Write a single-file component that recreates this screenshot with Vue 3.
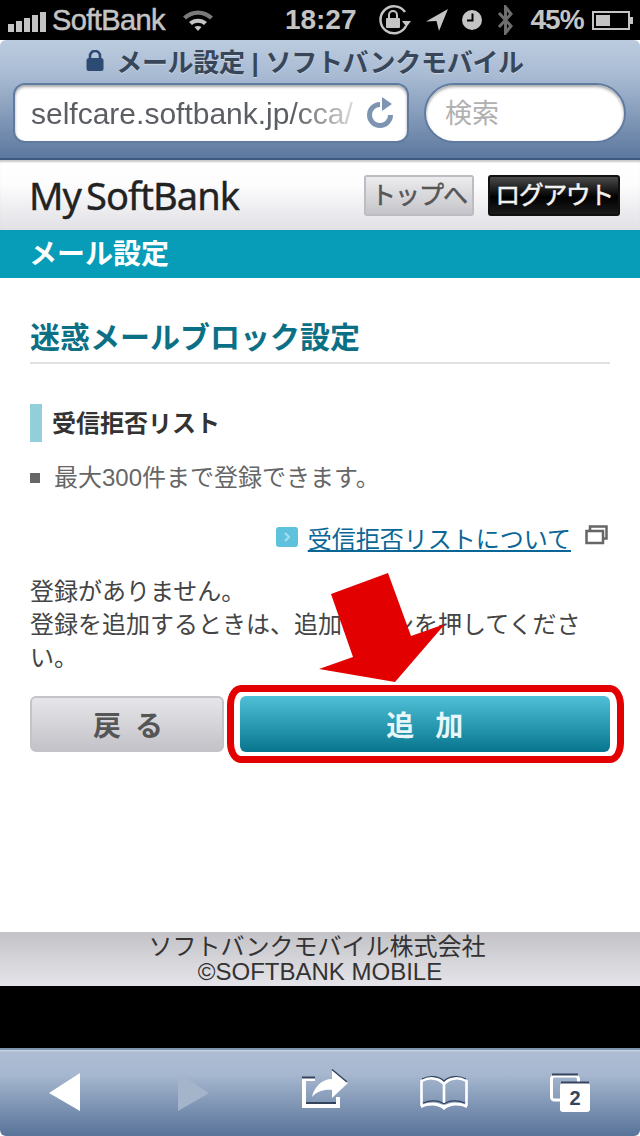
<template>
  <div class="phone">
    <!-- status bar -->
    <div class="status">
      <div class="signal">
        <i v-for="h in signalBars" :key="h" :style="{ height: h + 'px' }"></i>
      </div>
      <span class="carrier">SoftBank</span>
      <svg class="wifi" width="32" height="24" viewBox="0 0 32 24">
        <path d="M1 8.500C9.500 0.500 22.500 0.500 31 8.500L28 11.500C21 5 11 5 4 11.500Z" fill="#7a7a7a" />
        <path d="M7 14C12 9.500 20 9.500 25 14L22 17C18.500 14 13.500 14 10 17Z" fill="#c4c4c4" />
        <path d="M12.500 19C14.500 17.500 17.500 17.500 19.500 19L16 23Z" fill="#c4c4c4" />
      </svg>
      <span class="time">18:27</span>
      <svg class="rotlock" width="35" height="30" viewBox="0 0 35 30">
        <path d="M29 21A13.500 13.500 0 1 1 28 7" fill="none" stroke="#c4c4c4" stroke-width="2.500" />
        <path d="M25 16H34L29.500 22Z" fill="#c4c4c4" />
        <rect x="9" y="13" width="14" height="10" rx="1" fill="#c4c4c4" />
        <path d="M12 13V10A4 4 0 0 1 20 10V13" fill="none" stroke="#c4c4c4" stroke-width="2" />
      </svg>
      <svg class="locate" width="22" height="22" viewBox="0 0 22 22">
        <path d="M22 0L0 12.500L10.500 12L13 22Z" fill="#c4c4c4" />
      </svg>
      <svg class="clock" width="20" height="20" viewBox="0 0 20 20">
        <circle cx="10" cy="10" r="10" fill="#c4c4c4" />
        <path d="M10.500 3.500V10.500H5" fill="none" stroke="#000" stroke-width="2" />
      </svg>
      <svg class="bt" width="17" height="30" viewBox="0 0 17 30">
        <path d="M2 8L14 21L8.500 28V2L14 9L2 22" fill="none" stroke="#6e6e6e" stroke-width="3" />
      </svg>
      <span class="percent">45%</span>
      <div class="battery"><b></b></div>
    </div>

    <!-- safari address area -->
    <div class="browser-top">
      <div class="page-title">
        <svg width="18" height="21" viewBox="0 0 18 21">
          <path d="M4 9V6A5 5 0 0 1 14 6V9" fill="none" stroke="#2d4a73" stroke-width="2.600" />
          <rect x="0.500" y="8" width="17" height="13" rx="2.500" fill="#2d4a73" />
        </svg>
        <span>メール設定 | ソフトバンクモバイル</span>
      </div>
      <div class="fields">
        <div class="url">
          <span class="url-text">selfcare.softbank.jp/cca/</span>
          <svg width="28" height="32" viewBox="0 0 28 32">
            <path d="M23.500 18A10.500 10.500 0 1 1 13 7.500" fill="none" stroke="#7e95b2" stroke-width="5" />
            <path d="M15 0L25 7L15 14Z" fill="#7e95b2" />
          </svg>
        </div>
        <div class="search">検索</div>
      </div>
    </div>

    <!-- site header -->
    <header class="site-head">
      <span class="logo">My SoftBank</span>
      <div class="head-btns">
        <a class="btn-top">トップへ</a>
        <a class="btn-logout">ログアウト</a>
      </div>
    </header>
    <div class="band">メール設定</div>

    <main class="content">
      <h1>迷惑メールブロック設定</h1>
      <h2>受信拒否リスト</h2>
      <p class="note">最大300件まで登録できます。</p>
      <div class="link-row">
        <span class="chev">
          <svg width="8" height="12" viewBox="0 0 8 12">
            <path d="M2 2L6 6L2 10" fill="none" stroke="#a9deec" stroke-width="2" />
          </svg>
        </span>
        <a class="link">受信拒否リストについて</a>
        <svg class="win" width="23" height="20" viewBox="0 0 23 20">
          <rect x="5" y="1.500" width="16.500" height="12" fill="none" stroke="#666" stroke-width="2.500" />
          <rect x="1.500" y="6" width="16.500" height="12" fill="#fff" stroke="#666" stroke-width="2.500" />
        </svg>
      </div>
      <p class="msg">登録がありません。<br />登録を追加するときは、追加ボタンを押してください。</p>
      <div class="actions">
        <button class="back">戻 る</button>
        <button class="add">追 加</button>
      </div>
      <!-- annotation drawn over the screenshot -->
      <div class="ring"></div>
      <svg class="arrow" width="640" height="200" viewBox="0 0 640 200">
        <polygon points="388,3 331,24 353,87 319,99 395,112 445,54 411,66" fill="#e30000" />
      </svg>
    </main>

    <footer class="foot">
      <div class="foot-company">ソフトバンクモバイル株式会社</div>
      <div>©SOFTBANK MOBILE</div>
    </footer>
    <div class="gap"></div>

    <!-- safari toolbar -->
    <nav class="toolbar">
      <svg width="128" height="88" viewBox="0 0 128 88">
        <polygon points="80,25 80,63 49,45" fill="#fff" />
      </svg>
      <svg width="128" height="88" viewBox="128 0 128 88">
        <polygon points="178,25 178,63 209,45" fill="#a3b4cb" />
      </svg>
      <svg width="128" height="88" viewBox="256 0 128 88">
        <path d="M302 30H315V33H306V54H336V49H340V60H302Z" fill="#fff" />
        <path d="M302 29.500H315M306 55H336" stroke="#33445c" stroke-width="2" fill="none" />
        <path d="M332 22L348 35L332 50V42C325 41 317 43 312 49C314 39 322 31 332 31Z" fill="#fff" />
        <path d="M332 21.500L347 34" stroke="#33445c" stroke-width="1.500" fill="none" />
      </svg>
      <svg width="128" height="88" viewBox="384 0 128 88">
        <path d="M444 36C438 29 428 29 421.500 33V58M444 36C450 29 460 29 466.500 33V58M444 36V59" fill="none" stroke="#fff" stroke-width="2.600" />
        <path d="M421 57C430 53 440 54 444 58C448 54 458 53 467 57V60C458 56 449 57 444 62C439 57 430 56 421 60Z" fill="#fff" />
        <path d="M423 55C430 52 439 52 444 56C449 52 458 52 465 55M422 31C429 27 439 28 444 33C449 28 459 27 466 31" fill="none" stroke="#33445c" stroke-width="1.200" />
      </svg>
      <svg width="128" height="88" viewBox="512 0 128 88">
        <rect x="551.500" y="28" width="27" height="24" rx="3" fill="none" stroke="#fff" stroke-width="3" />
        <path d="M552 26.500H578" stroke="#33445c" stroke-width="2" />
        <rect x="560" y="35" width="30" height="29" rx="3" fill="#fff" />
        <path d="M561 34.500H589" stroke="#33445c" stroke-width="2" />
        <text class="tab-count" x="575" y="57" text-anchor="middle">2</text>
      </svg>
    </nav>
  </div>
</template>

<script setup>
const signalBars = [8, 11, 14, 17, 20]
</script>

<style>
html,
body {
  background: #000;
}
</style>

<style scoped>
.phone {
  width: 640px;
  height: 1136px;
  overflow: hidden;
  background: #fff;
  font-family: "Liberation Sans", "Noto Sans CJK JP", sans-serif;
}

.status {
  height: 40px;
  background: #000;
  color: #c4c4c4;
  display: flex;
  align-items: center;
  padding-left: 8px;
}
.signal {
  display: flex;
  align-items: flex-end;
  gap: 2px;
  width: 38px;
  height: 24px;
}
.signal i {
  display: block;
  width: 6px;
  background: #c4c4c4;
}
.carrier {
  margin-left: 6px;
  font-size: 29px;
  letter-spacing: -0.6px;
  -webkit-text-stroke: 0.5px #c4c4c4;
}
.wifi {
  margin-left: 17px;
}
.time {
  margin-left: 71px;
  font-size: 28px;
  font-weight: bold;
}
.rotlock {
  margin-left: 20px;
}
.locate {
  margin-left: 14px;
}
.clock {
  margin-left: 14px;
}
.bt {
  margin-left: 15px;
}
.percent {
  margin-left: 17px;
  font-size: 28px;
  font-weight: bold;
  letter-spacing: -1px;
}
.battery {
  position: relative;
  margin-left: 8px;
  width: 38px;
  height: 19px;
  border: 2px solid #c4c4c4;
  box-sizing: border-box;
  padding: 2px;
}
.battery b {
  display: block;
  width: 14px;
  height: 11px;
  background: #c4c4c4;
}
.battery::after {
  content: "";
  position: absolute;
  right: -5px;
  top: 4px;
  width: 3px;
  height: 7px;
  background: #c4c4c4;
}

.browser-top {
  height: 120px;
  box-sizing: border-box;
  border-radius: 6px 6px 0 0;
  border-bottom: 2px solid #3f5a80;
  background: linear-gradient(#bccbdf, #a9bbd3 30%, #5c789e);
}
.page-title {
  height: 43px;
  box-sizing: border-box;
  padding: 0 30px 3px 0;
  display: flex;
  align-items: center;
  justify-content: center;
  gap: 12px;
  color: #384659;
  font-size: 26px;
  font-weight: bold;
  text-shadow: 0 1px 0 rgba(255, 255, 255, 0.4);
  letter-spacing: -0.3px;
  white-space: nowrap;
}
.fields {
  display: flex;
  padding: 0 14px 0 13px;
  gap: 15px;
}
.url,
.search {
  height: 60px;
  box-sizing: border-box;
  background: #fff;
  border: 2px solid #5f7ba0;
  box-shadow: inset 0 2px 3px rgba(0, 0, 0, 0.35);
}
.url {
  width: 396px;
  border-radius: 12px;
  display: flex;
  align-items: center;
  padding-left: 16px;
  gap: 8px;
}
.url-text {
  width: 328px;
  overflow: hidden;
  white-space: nowrap;
  color: #5b5e63;
  font-size: 30px;
  padding-top: 2px;
  -webkit-mask-image: linear-gradient(90deg, #000 80%, rgba(0, 0, 0, 0.15));
  mask-image: linear-gradient(90deg, #000 80%, rgba(0, 0, 0, 0.15));
}
.search {
  width: 202px;
  border-radius: 30px;
  padding-left: 19px;
  line-height: 58px;
  color: #b0b0b0;
  font-size: 27px;
}

.site-head {
  height: 70px;
  box-sizing: border-box;
  display: flex;
  align-items: center;
  justify-content: space-between;
  padding: 0 20px 0 29px;
  background: linear-gradient(#fff, #fdfdfd 35%, #e0e0e6);
  box-shadow: inset 0 3px 2px -1px #c8c8c8;
}
.logo {
  font-family: "Noto Sans", sans-serif;
  font-size: 38px;
  letter-spacing: -0.9px;
  word-spacing: -4px;
  color: #222;
  -webkit-text-stroke: 0.4px #222;
}
.head-btns {
  display: flex;
  gap: 14px;
}
.btn-top,
.btn-logout {
  height: 41px;
  box-sizing: border-box;
  border-radius: 3px;
  text-align: center;
  font-size: 25px;
  line-height: 37px;
}
.btn-top {
  width: 110px;
  border: 2px solid #bcbcc2;
  background: linear-gradient(#ececee, #c4c4ca);
  color: #555;
  letter-spacing: -1px;
  -webkit-text-stroke: 0.5px #555;
}
.btn-logout {
  width: 132px;
  border: 2px solid #111;
  background: linear-gradient(#4a4a4a, #000 55%, #1c1c1c);
  color: #f2f2f2;
  letter-spacing: -1.5px;
  -webkit-text-stroke: 0.5px #f2f2f2;
}
.band {
  height: 48px;
  padding-left: 29px;
  background: #079db8;
  color: #fff;
  font-size: 28px;
  font-weight: bold;
  line-height: 50px;
}

.content {
  position: relative;
  height: 654px;
  box-sizing: border-box;
  padding: 40px 30px 0;
}
h1 {
  margin: 0;
  height: 44px;
  border-bottom: 2px solid #e2e2e2;
  color: #0b7085;
  font-size: 30px;
  line-height: 40px;
}
h2 {
  margin: 40px 0 0;
  height: 38px;
  padding-left: 10px;
  border-left: 12px solid #93cfdb;
  box-sizing: border-box;
  color: #333;
  font-size: 24px;
  line-height: 40px;
}
.note {
  margin: 19px 0 0;
  padding-left: 24px;
  position: relative;
  color: #666;
  font-size: 24px;
  line-height: 34px;
}
.note::before {
  content: "";
  position: absolute;
  left: 0;
  top: 12px;
  width: 10px;
  height: 10px;
  background: #666;
}
.link-row {
  margin-top: 25px;
  display: flex;
  align-items: center;
  justify-content: flex-end;
  padding-right: 2px;
  height: 34px;
}
.chev {
  width: 22px;
  height: 20px;
  border-radius: 3px;
  background: #5fc2dc;
  display: flex;
  align-items: center;
  justify-content: center;
  margin-right: 10px;
}
.link {
  color: #0a6696;
  font-size: 24px;
  text-decoration: underline;
  margin-right: -1px;
}
.win {
  margin-left: 15px;
  margin-bottom: 4px;
}
.msg {
  margin: 21px 0 0;
  color: #444;
  font-size: 24px;
  line-height: 33px;
}
.actions {
  margin-top: 22px;
  display: flex;
  gap: 16px;
}
.actions button {
  height: 56px;
  border-radius: 6px;
  font-family: inherit;
  font-size: 28px;
  font-weight: bold;
}
.back {
  width: 194px;
  padding: 0 0 0 5px;
  border: 2px solid #c4c4c8;
  background: linear-gradient(#e6e6ea, #c2c2c8);
  color: #555;
  letter-spacing: 3px;
}
.add {
  width: 370px;
  padding: 0 0 0 6px;
  border: 0;
  background: linear-gradient(#4fc0d8, #07758e);
  color: #e6f6f9;
  letter-spacing: 6.5px;
}
.ring {
  position: absolute;
  left: 227px;
  top: 407px;
  width: 397px;
  height: 78px;
  box-sizing: border-box;
  border: 7px solid #e30000;
  border-radius: 14px / 20px;
}
.arrow {
  position: absolute;
  left: 0;
  top: 292px;
}

.foot {
  height: 54px;
  background: linear-gradient(#c3c3c7, #e4e4ea);
  color: #333;
  text-align: center;
  font-size: 24px;
  line-height: 25px;
  padding-top: 2px;
  box-sizing: border-box;
}
.foot-company {
  padding-right: 6px;
}
.gap {
  height: 62px;
  background: #000;
}
.toolbar {
  height: 88px;
  box-sizing: border-box;
  display: grid;
  grid-template-columns: repeat(5, 128px);
  border-radius: 0 0 6px 6px;
  background: linear-gradient(#7f95b0 0, #7f95b0 2px, #d0dbe8 2px, #adbdd4 4px, #a6b7cf 30%, #587399);
}
.toolbar svg {
  display: block;
}
.tab-count {
  font-family: "Liberation Sans", sans-serif;
  font-size: 20px;
  font-weight: bold;
  fill: #33445c;
}
</style>
